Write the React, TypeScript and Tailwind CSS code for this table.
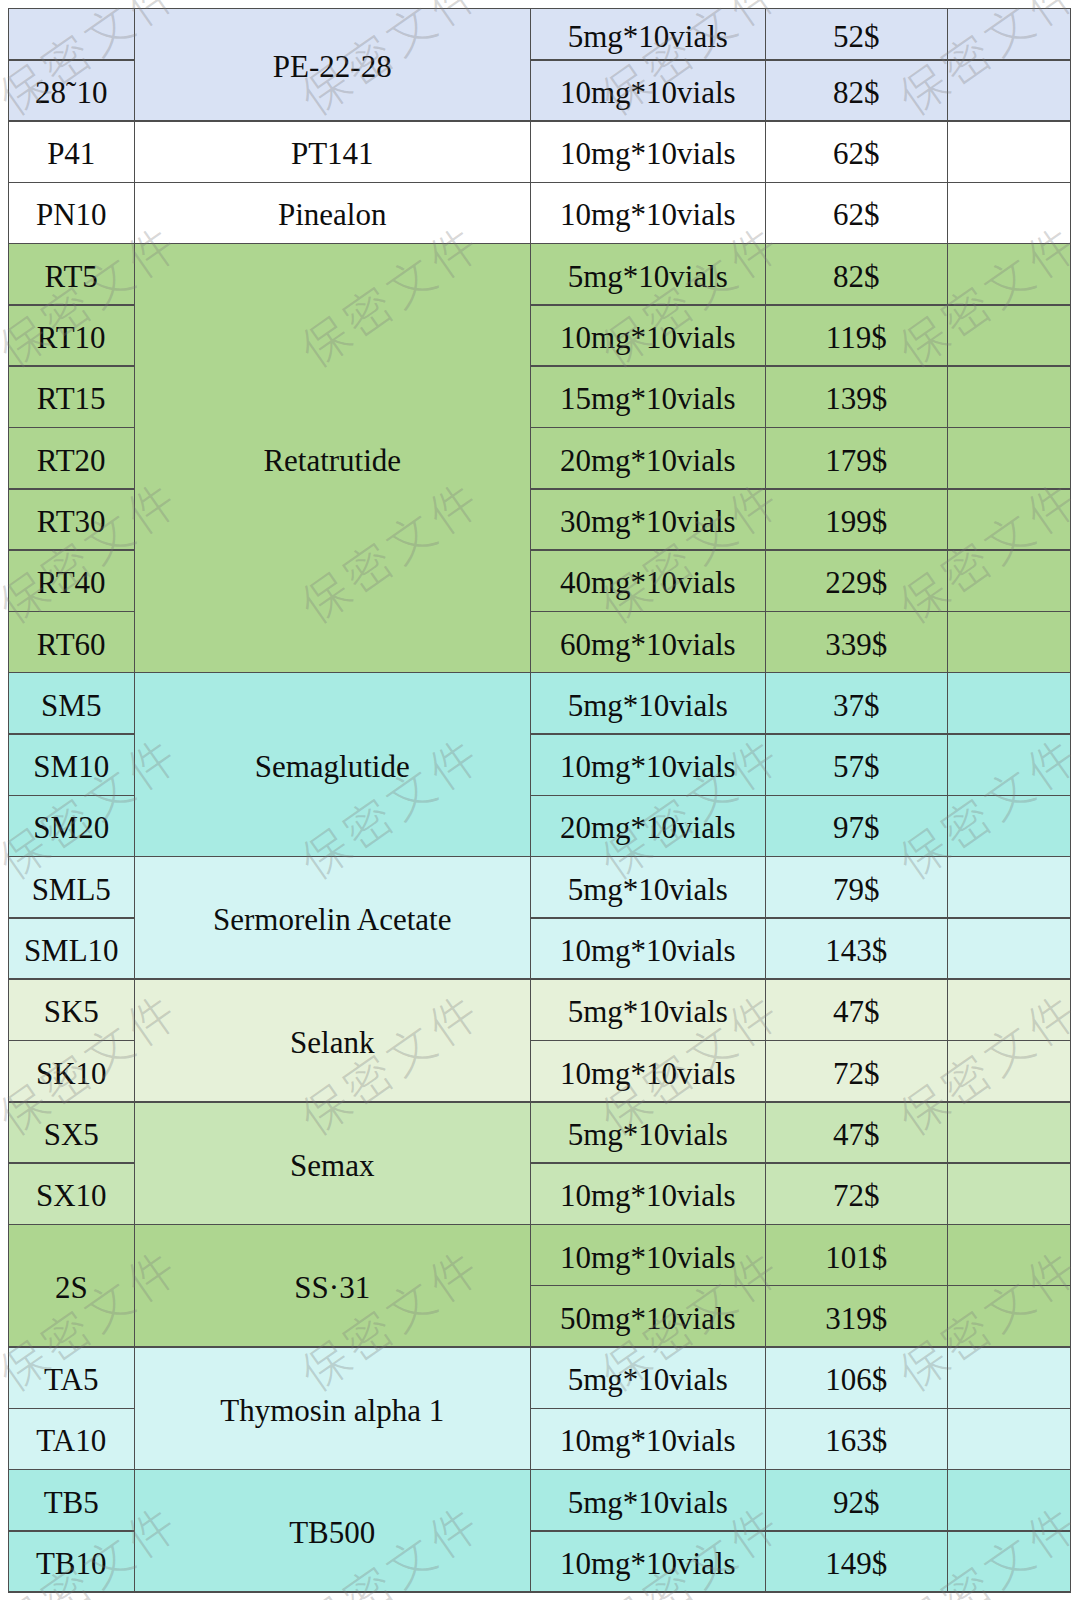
import React from "react";

type Row = {
  code?: string;
  codeSpan?: number;
  name?: string;
  nameSpan?: number;
  spec: string;
  price: string;
  bg: string;
};

const LAV = "bg-[#d9e2f4]";
const WHITE = "bg-white";
const GREEN = "bg-[#aed690]";
const TEAL = "bg-[#a8ebe3]";
const CYAN = "bg-[#d3f4f3]";
const PALE = "bg-[#e6f1d9]";
const SEMAX = "bg-[#c8e5b6]";

const rows: Row[] = [
  { code: "", name: "PE-22-28", nameSpan: 2, spec: "5mg*10vials", price: "52$", bg: LAV },
  { code: "28˜10", spec: "10mg*10vials", price: "82$", bg: LAV },
  { code: "P41", name: "PT141", nameSpan: 1, spec: "10mg*10vials", price: "62$", bg: WHITE },
  { code: "PN10", name: "Pinealon", nameSpan: 1, spec: "10mg*10vials", price: "62$", bg: WHITE },
  { code: "RT5", name: "Retatrutide", nameSpan: 7, spec: "5mg*10vials", price: "82$", bg: GREEN },
  { code: "RT10", spec: "10mg*10vials", price: "119$", bg: GREEN },
  { code: "RT15", spec: "15mg*10vials", price: "139$", bg: GREEN },
  { code: "RT20", spec: "20mg*10vials", price: "179$", bg: GREEN },
  { code: "RT30", spec: "30mg*10vials", price: "199$", bg: GREEN },
  { code: "RT40", spec: "40mg*10vials", price: "229$", bg: GREEN },
  { code: "RT60", spec: "60mg*10vials", price: "339$", bg: GREEN },
  { code: "SM5", name: "Semaglutide", nameSpan: 3, spec: "5mg*10vials", price: "37$", bg: TEAL },
  { code: "SM10", spec: "10mg*10vials", price: "57$", bg: TEAL },
  { code: "SM20", spec: "20mg*10vials", price: "97$", bg: TEAL },
  { code: "SML5", name: "Sermorelin Acetate", nameSpan: 2, spec: "5mg*10vials", price: "79$", bg: CYAN },
  { code: "SML10", spec: "10mg*10vials", price: "143$", bg: CYAN },
  { code: "SK5", name: "Selank", nameSpan: 2, spec: "5mg*10vials", price: "47$", bg: PALE },
  { code: "SK10", spec: "10mg*10vials", price: "72$", bg: PALE },
  { code: "SX5", name: "Semax", nameSpan: 2, spec: "5mg*10vials", price: "47$", bg: SEMAX },
  { code: "SX10", spec: "10mg*10vials", price: "72$", bg: SEMAX },
  { code: "2S", codeSpan: 2, name: "SS·31", nameSpan: 2, spec: "10mg*10vials", price: "101$", bg: GREEN },
  { spec: "50mg*10vials", price: "319$", bg: GREEN },
  { code: "TA5", name: "Thymosin alpha 1", nameSpan: 2, spec: "5mg*10vials", price: "106$", bg: CYAN },
  { code: "TA10", spec: "10mg*10vials", price: "163$", bg: CYAN },
  { code: "TB5", name: "TB500", nameSpan: 2, spec: "5mg*10vials", price: "92$", bg: TEAL },
  { code: "TB10", spec: "10mg*10vials", price: "149$", bg: TEAL },
];

const spanClass = (n: number) => {
  switch (n) {
    case 2:
      return "row-span-2";
    case 3:
      return "row-span-3";
    case 7:
      return "row-span-7";
    default:
      return "";
  }
};

const cellBase =
  "flex items-center justify-center pt-[4px] text-[31px] leading-none text-[#0d0d0d] whitespace-nowrap";

function Watermarks() {
  const xs = [88, 390, 690, 988];
  const ys = [42, 294, 550, 806, 1062, 1318, 1574];
  const items: React.ReactNode[] = [];
  ys.forEach((y, i) =>
    xs.forEach((x, j) => {
      items.push(
        <span
          key={`${i}-${j}`}
          className="absolute -translate-x-1/2 -translate-y-1/2 -rotate-[35deg] whitespace-nowrap text-[47px] font-light tracking-[5px] text-[#7a7a7a]/30 [font-family:'Noto_Sans_CJK_SC',sans-serif]"
          style={{ left: x, top: y }}
        >
          保密文件
        </span>
      );
    })
  );
  return <div className="pointer-events-none absolute inset-0 overflow-hidden">{items}</div>;
}

export default function App() {
  return (
    <div className="relative h-[1600px] w-[1078px] overflow-hidden bg-white p-[7.5px] [font-family:'Liberation_Serif','Times_New_Roman',serif]">
      <div className="grid w-[1063px] grid-cols-[124.5px_394.5px_233.5px_180.5px_121.5px] grid-rows-[50px_repeat(25,59.8px)] gap-[1.5px] bg-[#4e4e4e] p-[1.5px]">
        {rows.map((r, i) => (
          <React.Fragment key={i}>
            {r.code !== undefined && (
              <div className={`${cellBase} ${r.bg} ${spanClass(r.codeSpan ?? 1)}`}>{r.code}</div>
            )}
            {r.name !== undefined && (
              <div className={`${cellBase} ${r.bg} ${spanClass(r.nameSpan ?? 1)}`}>{r.name}</div>
            )}
            <div className={`${cellBase} ${r.bg}`}>{r.spec}</div>
            <div className={`${cellBase} ${r.bg}`}>{r.price}</div>
            <div className={`${cellBase} ${r.bg}`}></div>
          </React.Fragment>
        ))}
      </div>
      <Watermarks />
    </div>
  );
}
